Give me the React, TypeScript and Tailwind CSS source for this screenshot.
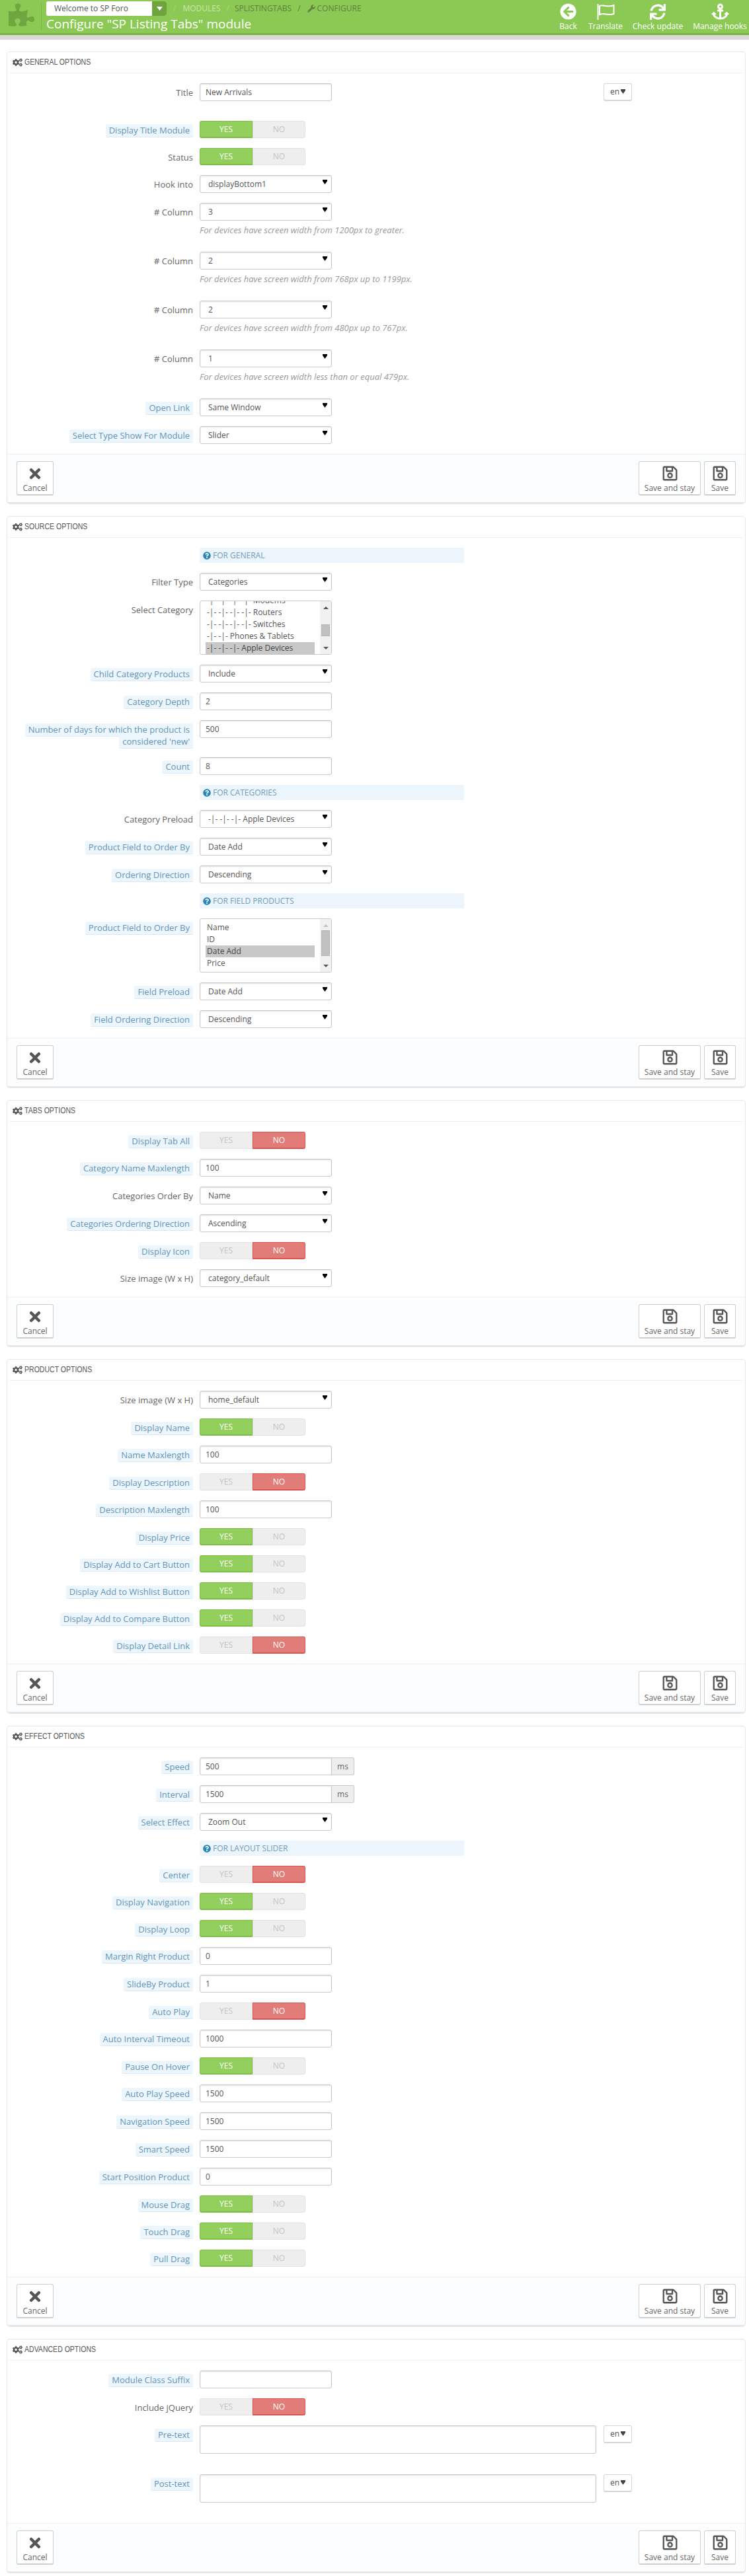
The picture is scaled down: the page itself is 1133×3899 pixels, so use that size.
import React from 'react';
import { FaArrowCircleLeft, FaSync, FaAnchor, FaWrench, FaCogs, FaQuestionCircle, FaTimes, FaRegSave, FaPuzzlePiece } from 'react-icons/fa';

const Caret = ({ className = '' }: { className?: string }) => (
  <svg width="7" height="7" viewBox="0 0 7 7" className={className}>
    <path d="M0 0H7V2L3.5 7L0 2Z" fill="currentColor" />
  </svg>
);

const Label = ({ text, tip }: { text: string; tip?: boolean }) => (
  <div className="w-[281px] shrink-0 pl-[20px] pt-[5px] text-right text-[13px] leading-[18px] text-[#666]">
    {tip ? (
      <span className="rounded-[3px] border-b border-[#d8eaf7] bg-[#edf6fc] px-[5px] pb-[1px] text-[#5f95ba] [box-decoration-break:clone]">{text}</span>
    ) : text}
  </div>
);

const Row = ({ label, tip, mb = 'mb-[15px]', children }: { label: string; tip?: boolean; mb?: string; children: React.ReactNode }) => (
  <div className={`flex ${mb}`}>
    <Label text={label} tip={tip} />
    <div className="ml-[10px]">{children}</div>
  </div>
);

const inputCls = 'h-[27px] w-[200px] rounded-[3px] border border-[#c8c8c8] bg-white px-[8px] text-[12px] text-[#555] shadow-[inset_0_1px_2px_rgba(0,0,0,0.12)] outline-none';

const Field = ({ label, tip = true, value = '' }: { label: string; tip?: boolean; value?: string }) => (
  <Row label={label} tip={tip}>
    <input readOnly value={value} className={inputCls} />
  </Row>
);

const SelectBox = ({ value }: { value: string }) => (
  <div className="flex h-[27px] w-[200px] items-center justify-between rounded-[3px] border border-[#c8c8c8] bg-white pl-[12px] pr-[6px] text-[12px] text-[#555] shadow-[inset_0_1px_2px_rgba(0,0,0,0.12)]">
    <span className="pt-[1px]">{value}</span>
    <Caret className="mb-[7px] text-black" />
  </div>
);

const Pick = ({ label, tip, value }: { label: string; tip?: boolean; value: string }) => (
  <Row label={label} tip={tip}>
    <SelectBox value={value} />
  </Row>
);

const Toggle = ({ label, tip = true, on }: { label: string; tip?: boolean; on: boolean }) => (
  <Row label={label} tip={tip}>
    <div className="flex h-[26px] w-[160px] text-center text-[12px] leading-[24px]">
      <div className={on
        ? 'w-[80px] rounded-l-[3px] border border-b-2 border-[#7cbd45] bg-[#92cf5c] text-white'
        : 'w-[80px] rounded-l-[3px] border border-[#e2e2e2] bg-[#eeeeee] text-[#c4c4c4]'}>YES</div>
      <div className={on
        ? 'w-[80px] rounded-r-[3px] border border-[#e2e2e2] bg-[#eeeeee] text-[#c4c4c4]'
        : 'w-[80px] rounded-r-[3px] border border-b-2 border-[#d9534f] bg-[#e27c79] text-white'}>NO</div>
    </div>
  </Row>
);

const Column = ({ value, help }: { value: string; help: string }) => (
  <Row label="# Column" mb="mb-[24px]">
    <SelectBox value={value} />
    <p className="mt-[5px] whitespace-nowrap text-[13px] italic leading-[18px] text-[#999]">{help}</p>
  </Row>
);

const Note = ({ text }: { text: string }) => (
  <div className="mb-[15px] ml-[291px] flex h-[23px] w-[400px] items-center gap-[3px] rounded-[2px] bg-[#ecf5fb] pl-[5px] text-[12px] text-[#6d9dbf]">
    <FaQuestionCircle className="text-[12px] text-[#2d86b8]" />
    <span>{text}</span>
  </div>
);

const Scrollbar = ({ thumb, upClass }: { thumb: string; upClass: string }) => (
  <div className="relative h-full w-[17px] shrink-0 bg-[#f1f1f1]">
    <svg width="8" height="4" viewBox="0 0 8 4" className={`absolute left-[5px] top-[8px] ${upClass}`}><path d="M0 4L4 0L8 4Z" fill="currentColor" /></svg>
    <div className={`mx-[2px] w-[13px] border border-[#b5b5b5] bg-[#c1c1c1] ${thumb}`} />
    <svg width="8" height="4" viewBox="0 0 8 4" className="absolute bottom-[7px] left-[5px] text-[#555]"><path d="M0 0L8 0L4 4Z" fill="currentColor" /></svg>
  </div>
);

const ListBox = ({ label, tip, items, selected, listClass, thumb, upClass }: { label: string; tip?: boolean; items: string[]; selected: string; listClass: string; thumb: string; upClass: string }) => (
  <Row label={label} tip={tip}>
    <div className="flex h-[82px] w-[200px] overflow-hidden rounded-[3px] border border-[#c8c8c8] bg-white text-[12px] leading-[18px] text-[#555]">
      <div className={`flex-1 px-[8px] ${listClass}`}>
        {items.map(item => (
          <div key={item} className={item === selected ? 'whitespace-pre bg-[#c8c8c8] px-[2px] text-[#444]' : 'whitespace-pre px-[2px]'}>{item}</div>
        ))}
      </div>
      <Scrollbar thumb={thumb} upClass={upClass} />
    </div>
  </Row>
);

const LangButton = () => (
  <div className="flex h-[27px] w-[43px] shrink-0 items-center justify-center gap-[2px] rounded-[3px] border border-b-2 border-[#d5d5d5] bg-white text-[12px] text-[#555]">
    en<Caret className="mb-[1px] text-[#444]" />
  </div>
);

const TextArea = ({ label }: { label: string }) => (
  <Row label={label} tip mb="mb-[31px]">
    <div className="flex gap-[11px]">
      <textarea readOnly className="block h-[43px] w-[600px] resize-none rounded-[3px] border border-[#c8c8c8] bg-white shadow-[inset_0_1px_2px_rgba(0,0,0,0.12)] outline-none" />
      <LangButton />
    </div>
  </Row>
);

const FooterButton = ({ label, width, icon }: { label: string; width: string; icon: React.ReactNode }) => (
  <div className={`flex h-[52px] flex-col items-center rounded-[3px] border border-b-2 border-[#cfcfcf] bg-white pt-[5px] text-[12px] leading-[18px] text-[#666] ${width}`}>
    <div className="flex h-[25px] items-center text-[#555]">{icon}</div>
    <span className="mt-[1px]">{label}</span>
  </div>
);

const Panel = ({ title, children }: { title: string; children: React.ReactNode }) => (
  <section className="mb-[18px] rounded-[5px] border border-b-[3px] border-[#e6e6e6] bg-white">
    <div className="mx-[3px] flex h-[32px] items-center gap-[3px] border-b border-[#eeeeee] pl-[5px] text-[14px] text-[#555]">
      <FaCogs className="text-[15px]" />
      <span className="[font-family:'Liberation_Sans',sans-serif] text-[13.5px] uppercase [transform-origin:left] scale-x-[0.78]">{title}</span>
    </div>
    <div className="pt-[15px]">{children}</div>
    <div className="flex justify-between rounded-b-[4px] border-t border-[#eeeeee] bg-[#fcfdfe] px-[14px] py-[10px]">
      <FooterButton label="Cancel" width="w-[56px]" icon={<FaTimes className="text-[24px]" />} />
      <div className="flex gap-[5px]">
        <FooterButton label="Save and stay" width="w-[94px]" icon={<FaRegSave className="text-[25px]" />} />
        <FooterButton label="Save" width="w-[48px]" icon={<FaRegSave className="text-[25px]" />} />
      </div>
    </div>
  </section>
);

const HeaderAction = ({ label, width, icon }: { label: string; width: string; icon: React.ReactNode }) => (
  <div className={`flex flex-col items-center text-white ${width}`}>
    <div className="flex h-[29px] items-center">{icon}</div>
    <span className="mt-[-1px] whitespace-nowrap text-[12px] leading-[18px]">{label}</span>
  </div>
);

const Header = () => (
  <header>
    <div className="flex h-[53px] justify-between border-b-[3px] border-[#78b043] bg-[#8bc954]">
      <div className="flex">
        <div className="flex w-[62px] justify-center pl-[2px] pt-[3px]">
          <FaPuzzlePiece className="text-[39px] text-[#6fa63f]" />
        </div>
        <div className="mt-[4px] h-[42px] w-px bg-[#7ab545]" />
        <div className="ml-[7px]">
          <div className="flex items-center pt-[2px]">
            <div className="flex h-[22px] w-[182px] overflow-hidden rounded-[3px] bg-white text-[12px] leading-[22px] text-[#555]">
              <span className="w-[160px] pl-[12px]">Welcome to SP Foro</span>
              <div className="flex flex-1 items-center justify-center bg-[#6ea33d] text-white">
                <svg width="9" height="6" viewBox="0 0 9 6"><path d="M0 0H9L4.5 6Z" fill="currentColor" /></svg>
              </div>
            </div>
            <div className="ml-[10px] flex items-center text-[12px] uppercase text-[#5f7f42]">
              <span className="text-[#a6d67d]">/</span>
              <span className="ml-[10px] text-[#c8e8ac]">Modules</span>
              <span className="ml-[9px] text-[#a6d67d]">/</span>
              <span className="ml-[8px]">SPListingTabs</span>
              <span className="ml-[9px]">/</span>
              <FaWrench className="ml-[10px] text-[12px]" />
              <span className="ml-[3px]">Configure</span>
            </div>
          </div>
          <h1 className="mt-[-1px] whitespace-nowrap text-[19px] font-normal leading-[26px] text-white">Configure "SP Listing Tabs" module</h1>
        </div>
      </div>
      <div className="mr-[3px] flex pt-[3px]">
        <HeaderAction label="Back" width="w-[25px]" icon={<FaArrowCircleLeft className="text-[25px]" />} />
        <HeaderAction label="Translate" width="ml-[18px] w-[52px]" icon={
          <svg width="28" height="25" viewBox="0 0 28 25" fill="none" stroke="currentColor">
            <path d="M2.5 1V25" strokeWidth="2" />
            <path d="M5 4C11 1 16 7 26.5 3V16C17 19 12 14 5 17Z" strokeWidth="2" />
          </svg>
        } />
        <HeaderAction label="Check update" width="ml-[15px] w-[76px]" icon={<FaSync className="text-[24px]" />} />
        <HeaderAction label="Manage hooks" width="ml-[15px] w-[82px]" icon={<FaAnchor className="text-[27px]" />} />
      </div>
    </div>
    <div className="h-[7px] bg-[#d8d8d8]" />
  </header>
);

const App = () => (
  <div className="h-[3899px] overflow-hidden bg-white [font-family:'Open_Sans',sans-serif]">
    <Header />
    <main className="pl-[10px] pr-[5px] pt-[18px]">
      <Panel title="General Options">
        <Row label="Title" mb="mb-[30px]">
          <div className="flex w-[654px] justify-between">
            <input readOnly value="New Arrivals" className={inputCls} />
            <LangButton />
          </div>
        </Row>
        <Toggle label="Display Title Module" on />
        <Toggle label="Status" tip={false} on />
        <Pick label="Hook into" value="displayBottom1" />
        <Column value="3" help="For devices have screen width from 1200px to greater." />
        <Column value="2" help="For devices have screen width from 768px up to 1199px." />
        <Column value="2" help="For devices have screen width from 480px up to 767px." />
        <Column value="1" help="For devices have screen width less than or equal 479px." />
        <Pick label="Open Link" tip value="Same Window" />
        <Pick label="Select Type Show For Module" tip value="Slider" />
      </Panel>

      <Panel title="Source Options">
        <Note text="FOR GENERAL" />
        <Pick label="Filter Type" value="Categories" />
        <ListBox
          label="Select Category"
          items={['-|- -|- -|- -|- Modems', '-|- -|- -|- -|- Routers', '-|- -|- -|- -|- Switches', '-|- -|- Phones & Tablets', '-|- -|- -|- Apple Devices']}
          selected="-|- -|- -|- Apple Devices"
          listClass="mt-[-10px]"
          thumb="mt-[35px] h-[18px]"
          upClass="text-[#555]"
        />
        <Pick label="Child Category Products" tip value="Include" />
        <Field label="Category Depth" value="2" />
        <Field label="Number of days for which the product is considered 'new'" value="500" />
        <Field label="Count" value="8" />
        <Note text="FOR CATEGORIES" />
        <Pick label="Category Preload" value="-|- -|- -|- Apple Devices" />
        <Pick label="Product Field to Order By" tip value="Date Add" />
        <Pick label="Ordering Direction" tip value="Descending" />
        <Note text="FOR FIELD PRODUCTS" />
        <ListBox
          label="Product Field to Order By"
          tip
          items={['Name', 'ID', 'Date Add', 'Price']}
          selected="Date Add"
          listClass="pt-[4px]"
          thumb="mt-[17px] h-[39px]"
          upClass="text-[#c4c4c4]"
        />
        <Pick label="Field Preload" tip value="Date Add" />
        <Pick label="Field Ordering Direction" tip value="Descending" />
      </Panel>

      <Panel title="Tabs Options">
        <Toggle label="Display Tab All" on={false} />
        <Field label="Category Name Maxlength" value="100" />
        <Pick label="Categories Order By" value="Name" />
        <Pick label="Categories Ordering Direction" tip value="Ascending" />
        <Toggle label="Display Icon" on={false} />
        <Pick label="Size image (W x H)" value="category_default" />
      </Panel>

      <Panel title="Product Options">
        <Pick label="Size image (W x H)" value="home_default" />
        <Toggle label="Display Name" on />
        <Field label="Name Maxlength" value="100" />
        <Toggle label="Display Description" on={false} />
        <Field label="Description Maxlength" value="100" />
        <Toggle label="Display Price" on />
        <Toggle label="Display Add to Cart Button" on />
        <Toggle label="Display Add to Wishlist Button" on />
        <Toggle label="Display Add to Compare Button" on />
        <Toggle label="Display Detail Link" on={false} />
      </Panel>

      <Panel title="Effect Options">
        {[['Speed', '500'], ['Interval', '1500']].map(([label, value]) => (
          <Row key={label} label={label} tip>
            <div className="flex h-[27px] w-[234px] text-[12px]">
              <input readOnly value={value} className="h-[27px] w-[200px] rounded-l-[3px] border border-[#c8c8c8] bg-white px-[8px] text-[#555] shadow-[inset_0_1px_2px_rgba(0,0,0,0.12)] outline-none" />
              <div className="flex-1 rounded-r-[3px] border border-l-0 border-[#c8c8c8] bg-[#eeeeee] text-center leading-[25px] text-[#666]">ms</div>
            </div>
          </Row>
        ))}
        <Pick label="Select Effect" tip value="Zoom Out" />
        <Note text="FOR LAYOUT SLIDER" />
        <Toggle label="Center" on={false} />
        <Toggle label="Display Navigation" on />
        <Toggle label="Display Loop" on />
        <Field label="Margin Right Product" value="0" />
        <Field label="SlideBy Product" value="1" />
        <Toggle label="Auto Play" on={false} />
        <Field label="Auto Interval Timeout" value="1000" />
        <Toggle label="Pause On Hover" on />
        <Field label="Auto Play Speed" value="1500" />
        <Field label="Navigation Speed" value="1500" />
        <Field label="Smart Speed" value="1500" />
        <Field label="Start Position Product" value="0" />
        <Toggle label="Mouse Drag" on />
        <Toggle label="Touch Drag" on />
        <Toggle label="Pull Drag" on />
      </Panel>

      <Panel title="Advanced Options">
        <Field label="Module Class Suffix" />
        <Toggle label="Include jQuery" tip={false} on={false} />
        <TextArea label="Pre-text" />
        <TextArea label="Post-text" />
      </Panel>
    </main>
  </div>
);

export default App;
